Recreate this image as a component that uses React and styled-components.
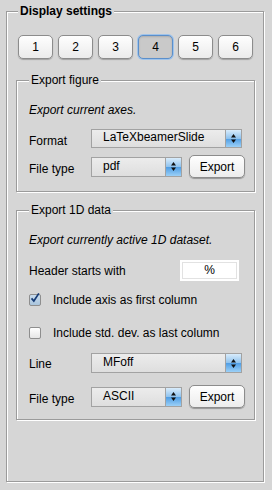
import React from "react"
import styled, { createGlobalStyle, css } from "styled-components"

const GlobalStyle = createGlobalStyle`
	html, body {
		margin: 0;
		padding: 0;
		background: #d6d6d6;
	}
	body {
		font-family: "Liberation Sans", Arial, sans-serif;
		font-size: 12px;
		color: #000;
	}
`

const Page = styled.div`
	width: 272px;
	height: 490px;
	padding: 4px 0 0 6px;
	box-sizing: border-box;
`

const Group = styled.fieldset`
	margin: ${(p) => p.$top || 0}px 0 0 0;
	min-inline-size: auto;
	box-sizing: border-box;
	border: 1px solid #9b9b9b;
	box-shadow: inset 1px 1px 0 #fff, 1px 1px 0 #fff;
	padding: ${(p) => p.$pad};
	width: ${(p) => p.$width};
`

const Content = styled.div`
	height: 463px;
`

const Title = styled.legend`
	padding: 0 2px;
	margin-left: ${(p) => p.$offset}px;
	line-height: 14px;
	font-size: 12px;
	font-weight: ${(p) => (p.$bold ? 700 : 400)};
	background: #d6d6d6;
`

const ButtonRow = styled.div`
	display: flex;
	gap: 5px;
	padding: 17px 0 14px 2px;
`

const TabButton = styled.button`
	width: 35px;
	height: 24px;
	padding: 0;
	font-family: inherit;
	font-size: 12px;
	color: #000;
	border-radius: 5px;
	border: 1px solid #8c8c8c;
	background: linear-gradient(#fefefe, #ebebeb);
	box-shadow: 0 1px 1px rgba(0, 0, 0, 0.25);
	${(p) =>
		p.$active &&
		css`
			background: #c9c9c9;
			border-color: #5b8fcb;
			box-shadow: 0 0 0 1px #9fc3ea, inset 0 1px 2px rgba(0, 0, 0, 0.15);
		`}
`

const Note = styled.div`
	font-style: italic;
	line-height: 14px;
	margin-bottom: ${(p) => p.$gap}px;
`

const Row = styled.div`
	display: flex;
	align-items: center;
	height: ${(p) => p.$h}px;
	margin-bottom: ${(p) => p.$gap || 0}px;
`

const Label = styled.span`
	width: 62px;
	flex: none;
	line-height: 14px;
	margin-top: ${(p) => p.$drop || 0}px;
`

const SelectBox = styled.div`
	width: ${(p) => p.$w}px;
	height: ${(p) => p.$h}px;
	box-sizing: border-box;
	display: flex;
	border: 1px solid #a2a2a2;
	background: linear-gradient(#ececec, #dedede);
`

const SelectValue = styled.span`
	flex: 1;
	padding-left: 11px;
	line-height: ${(p) => p.$h - 4}px;
`

const Stepper = styled.span`
	width: 15px;
	flex: none;
	display: flex;
	align-items: center;
	justify-content: center;
	border-left: 1px solid #a2a2a2;
	background: linear-gradient(#d9ecfb, #8ec2ee 50%, #4f9de4 51%, #9bd0f7);
`

const ExportButton = styled.button`
	width: 56px;
	height: 23px;
	margin-left: 7px;
	padding: 0;
	font-family: inherit;
	font-size: 12px;
	color: #000;
	border-radius: 5px;
	border: 1px solid #8c8c8c;
	background: linear-gradient(#fefefe, #ececec);
	box-shadow: 0 1px 1px rgba(0, 0, 0, 0.3);
`

const HeaderLabel = styled.span`
	flex: 1;
	line-height: 14px;
`

const TextField = styled.div`
	width: 59px;
	height: 21px;
	margin-right: 7px;
	box-sizing: border-box;
	background: #fff;
	border: 2px solid #fff;
	outline: 1px solid #e2e2e2;
	outline-offset: -3px;
	text-align: center;
	line-height: 17px;
`

const CheckRow = styled.label`
	display: flex;
	align-items: center;
	gap: 12px;
	height: 15px;
	margin-bottom: ${(p) => p.$gap}px;
`

const Box = styled.span`
	width: 12px;
	height: 12px;
	box-sizing: border-box;
	border: 1px solid #8e8e8e;
	border-radius: 2px;
	background: ${(p) =>
		p.$checked ? "linear-gradient(#c9dced, #a9c4dc)" : "linear-gradient(#ffffff, #e6e6e6)"};
	display: flex;
	align-items: flex-end;
	justify-content: center;
	overflow: visible;
`

function Arrows() {
	return (
		<svg width="7" height="11" viewBox="0 0 7 11">
			<path d="M3.5 1 L6 4.5 L1 4.5 Z" fill="#111" />
			<path d="M3.5 10 L6 6.5 L1 6.5 Z" fill="#111" />
		</svg>
	)
}

function Select({ value, w, h }) {
	return (
		<SelectBox $w={w} $h={h}>
			<SelectValue $h={h}>{value}</SelectValue>
			<Stepper>
				<Arrows />
			</Stepper>
		</SelectBox>
	)
}

function Check({ checked, children, gap }) {
	return (
		<CheckRow $gap={gap}>
			<Box $checked={checked}>
				{checked && (
					<svg width="13" height="14" viewBox="0 0 13 14">
						<path d="M2 7.5 L5 11 L11.5 1" stroke="#163a74" strokeWidth="2.2" fill="none" />
					</svg>
				)}
			</Box>
			{children}
		</CheckRow>
	)
}

export default function App() {
	return (
		<>
			<GlobalStyle />
			<Page>
				<Group $pad="0 8px 0 9px" $width="258px">
					<Title $bold $offset={2}>
						Display settings
					</Title>
					<Content>
						<ButtonRow>
							{[1, 2, 3, 4, 5, 6].map((n) => (
								<TabButton key={n} $active={n === 4}>
									{n}
								</TabButton>
							))}
						</ButtonRow>

						<Group $pad="16px 8px 13px 12px" $width="239px">
							<Title $offset={0}>Export figure</Title>
							<Note $gap={12}>Export current axes.</Note>
							<Row $h={19} $gap={7}>
								<Label $drop={4}>Format</Label>
								<Select value="LaTeXbeamerSlide" w={151} h={19} />
							</Row>
							<Row $h={23}>
								<Label $drop={4}>File type</Label>
								<Select value="pdf" w={91} h={20} />
								<ExportButton>Export</ExportButton>
							</Row>
						</Group>

						<Group $top={11} $pad="16px 8px 11px 12px" $width="239px">
							<Title $offset={0}>Export 1D data</Title>
							<Note $gap={13}>Export currently active 1D dataset.</Note>
							<Row $h={21} $gap={11}>
								<HeaderLabel>Header starts with</HeaderLabel>
								<TextField>%</TextField>
							</Row>
							<Check checked gap={18}>
								Include axis as first column
							</Check>
							<Check gap={13}>Include std. dev. as last column</Check>
							<Row $h={20} $gap={12}>
								<Label $drop={2}>Line</Label>
								<Select value="MFoff" w={151} h={20} />
							</Row>
							<Row $h={23}>
								<Label $drop={4}>File type</Label>
								<Select value="ASCII" w={91} h={20} />
								<ExportButton>Export</ExportButton>
							</Row>
						</Group>
					</Content>
				</Group>
			</Page>
		</>
	)
}
